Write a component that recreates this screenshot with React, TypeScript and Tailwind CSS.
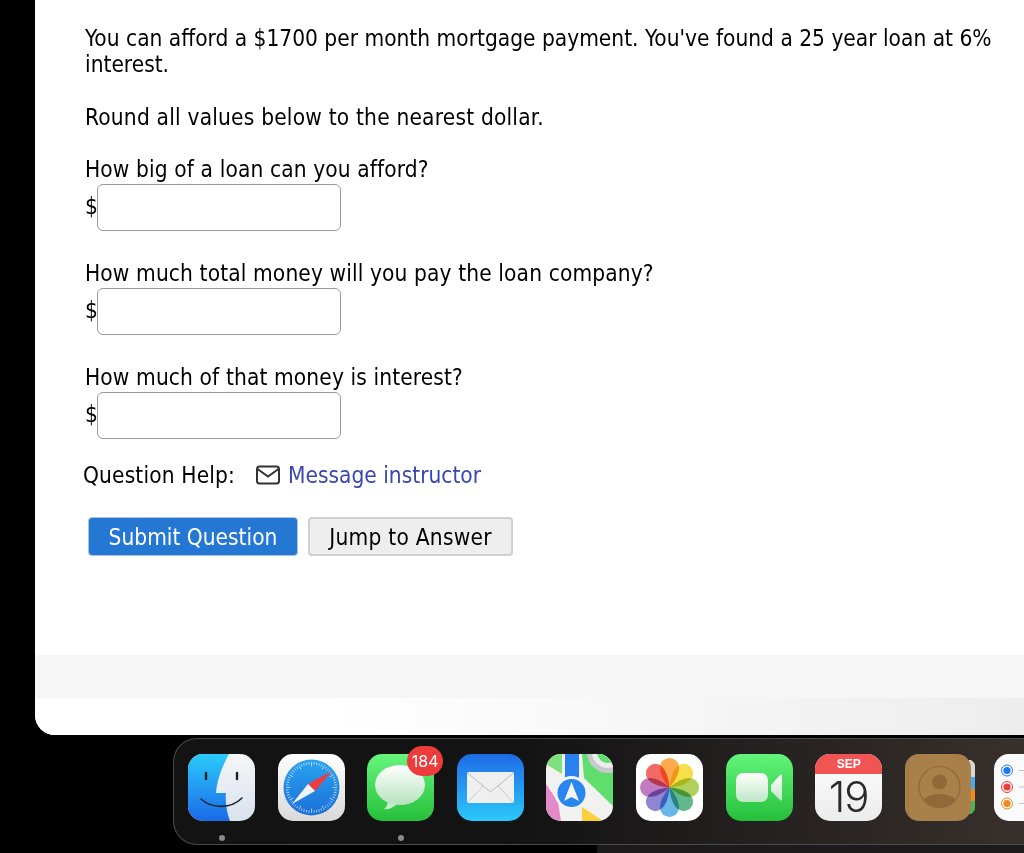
import React from "react";

const font = { fontFamily: '"DejaVu Sans Condensed", "DejaVu Sans", sans-serif', fontStretch: "condensed" } as React.CSSProperties;

const questions = [
  "How big of a loan can you afford?",
  "How much total money will you pay the loan company?",
  "How much of that money is interest?",
];

function Finder() {
  return (
    <svg viewBox="0 0 67 67" className="w-[67px] h-[67px]">
      <defs>
        <linearGradient id="finderBlue" x1="0" y1="0" x2="0" y2="1">
          <stop offset="0" stopColor="#2bcbfb" />
          <stop offset="1" stopColor="#1a6ae8" />
        </linearGradient>
        <linearGradient id="finderLight" x1="0" y1="0" x2="0" y2="1">
          <stop offset="0" stopColor="#f5f6f7" />
          <stop offset="1" stopColor="#d8e2ee" />
        </linearGradient>
        <clipPath id="finderClip"><rect width="67" height="67" rx="15" /></clipPath>
      </defs>
      <g clipPath="url(#finderClip)">
        <rect width="67" height="67" fill="url(#finderLight)" />
        <path d="M0 0H41C35 11 29 25 28 39H38C37 49 39 59 42 67H0Z" fill="url(#finderBlue)" />
      </g>
      <path d="M18 19v6M49 19v6" stroke="#222" strokeWidth="2.4" strokeLinecap="round" />
      <path d="M13 45C24 55 43 55 54 44" stroke="#1c2530" strokeWidth="1.6" fill="none" strokeLinecap="round" />
    </svg>
  );
}

function Safari() {
  const ticks = Array.from({ length: 60 }, (_, i) => i * 6);
  return (
    <svg viewBox="0 0 67 67" className="w-[67px] h-[67px]">
      <defs>
        <linearGradient id="safariBg" x1="0" y1="0" x2="0" y2="1">
          <stop offset="0" stopColor="#ffffff" />
          <stop offset="1" stopColor="#d9d9d9" />
        </linearGradient>
        <linearGradient id="safariDial" x1="0" y1="0" x2="0" y2="1">
          <stop offset="0" stopColor="#2aa3ef" />
          <stop offset="1" stopColor="#1c6fd8" />
        </linearGradient>
      </defs>
      <rect width="67" height="67" rx="15" fill="url(#safariBg)" />
      <circle cx="33.5" cy="33.5" r="28" fill="url(#safariDial)" />
      {ticks.map((a) => (
        <line key={a} x1="33.5" y1="8" x2="33.5" y2={a % 30 === 0 ? 12.5 : 10.5} stroke="#d8ecfb" strokeWidth="0.7" transform={`rotate(${a} 33.5 33.5)`} />
      ))}
      <path d="M54 17L30 30L37 37Z" fill="#ee3d3c" />
      <path d="M14 50L30 30L37 37Z" fill="#f2f2f2" />
    </svg>
  );
}

function Messages() {
  return (
    <svg viewBox="0 0 67 67" className="w-[67px] h-[67px]">
      <defs>
        <linearGradient id="msgBg" x1="0" y1="0" x2="0" y2="1">
          <stop offset="0" stopColor="#66f67c" />
          <stop offset="1" stopColor="#26bf3b" />
        </linearGradient>
        <linearGradient id="msgBubble" x1="0" y1="0" x2="0" y2="1">
          <stop offset="0" stopColor="#ffffff" />
          <stop offset="1" stopColor="#b5e2bd" />
        </linearGradient>
      </defs>
      <rect width="67" height="67" rx="15" fill="url(#msgBg)" />
      <path d="M21 46C21 50 19 54 17 55C21 56 26 54 30 50Z" fill="#c6ebcd" />
      <ellipse cx="33" cy="31" rx="25" ry="20" fill="url(#msgBubble)" />
    </svg>
  );
}

function Mail() {
  return (
    <svg viewBox="0 0 67 67" className="w-[67px] h-[67px]">
      <defs>
        <linearGradient id="mailBg" x1="0" y1="0" x2="0" y2="1">
          <stop offset="0" stopColor="#1f6be6" />
          <stop offset="1" stopColor="#2bc9fb" />
        </linearGradient>
      </defs>
      <rect width="67" height="67" rx="15" fill="url(#mailBg)" />
      <rect x="10" y="18" width="47" height="31" rx="2" fill="#f0efef" />
      <path d="M10.5 19L33.5 38L56.5 19" fill="none" stroke="#b9b9bd" strokeWidth="1" />
      <path d="M11 48L26 32M56 48L41 32" fill="none" stroke="#c9c9cc" strokeWidth="1" />
    </svg>
  );
}

function Maps() {
  return (
    <svg viewBox="0 0 67 67" className="w-[67px] h-[67px]">
      <defs>
        <clipPath id="mapsClip"><rect width="67" height="67" rx="15" /></clipPath>
      </defs>
      <g clipPath="url(#mapsClip)">
        <rect width="67" height="67" fill="#f1f1ef" />
        <path d="M0 0H16V20L0 10Z" fill="#7fe07f" />
        <path d="M0 30L12 48L15 67H0Z" fill="#e58ac8" />
        <path d="M36 67V53L57 67Z" fill="#fdd03a" />
        <path d="M36 0H67V52L38 24Z" fill="#5fdd6d" />
        <path d="M19 0H33V30H19Z" fill="#2a80ee" />
        <circle cx="62" cy="-2" r="21" fill="#c9c9cd" />
        <circle cx="62" cy="-2" r="16" fill="#ececee" />
        <circle cx="62" cy="-2" r="11" fill="#5fdd6d" />
        <circle cx="25.5" cy="39" r="17" fill="#f3f3f5" />
        <circle cx="25.5" cy="39" r="14" fill="#2787ee" />
        <path d="M25.5 28L33 47L25.5 43L18 47Z" fill="#f5f5f5" />
      </g>
    </svg>
  );
}

function Photos() {
  const petals = [
    ["#f9a23c", 0], ["#f5dc34", 45], ["#a9cb48", 90], ["#4fb07e", 135],
    ["#5aaee6", 180], ["#8478cc", 225], ["#b86eb8", 270], ["#ef5a55", 315],
  ] as const;
  return (
    <svg viewBox="0 0 67 67" className="w-[67px] h-[67px]">
      <rect width="67" height="67" rx="15" fill="#ffffff" />
      {petals.map(([color, a]) => (
        <path
          key={a}
          d="M33.5 33.5C27 26 24 19 24 13.5A9.5 9.5 0 0 1 43 13.5C43 19 40 26 33.5 33.5Z"
          fill={color}
          fillOpacity="0.9"
          className="mix-blend-multiply"
          transform={`rotate(${a} 33.5 33.5)`}
        />
      ))}
    </svg>
  );
}

function FaceTime() {
  return (
    <svg viewBox="0 0 67 67" className="w-[67px] h-[67px]">
      <defs>
        <linearGradient id="ftBg" x1="0" y1="0" x2="0" y2="1">
          <stop offset="0" stopColor="#63f57b" />
          <stop offset="1" stopColor="#26bf3c" />
        </linearGradient>
        <linearGradient id="ftCam" x1="0" y1="0" x2="0" y2="1">
          <stop offset="0" stopColor="#ffffff" />
          <stop offset="1" stopColor="#bfe6c6" />
        </linearGradient>
      </defs>
      <rect width="67" height="67" rx="15" fill="url(#ftBg)" />
      <rect x="10" y="19" width="32" height="29" rx="7" fill="url(#ftCam)" />
      <path d="M45 31L54 21C55 20 56 21 56 22V45C56 47 55 47 54 46L45 37Z" fill="url(#ftCam)" />
    </svg>
  );
}

function CalendarIcon() {
  return (
    <div className="w-[67px] h-[67px] rounded-[15px] overflow-hidden bg-gradient-to-b from-white to-[#ececec] flex flex-col items-center">
      <div className="w-full h-[20px] bg-[#f25454] text-white text-center text-[12px] leading-[20px] font-semibold font-['Liberation_Sans',sans-serif]">SEP</div>
      <div className="text-[#2a2a2a] text-[42px] leading-[46px] font-light tracking-[-1px] font-['Inter',sans-serif]">19</div>
    </div>
  );
}

function Contacts() {
  return (
    <svg viewBox="0 0 67 67" className="w-[67px] h-[67px] overflow-visible">
      <defs>
        <clipPath id="contactsRing"><circle cx="34.5" cy="33" r="20" /></clipPath>
      </defs>
      <path d="M62 6H66C69 8 70 10 70 12V23H62Z" fill="#d8d8d4" />
      <rect x="62" y="23" width="8" height="12" fill="#4aa9e8" />
      <rect x="62" y="35" width="8" height="12" fill="#ee8a1e" />
      <path d="M62 47H70V54C70 57 68 58 66 60H62Z" fill="#4cb25c" />
      <rect width="66" height="67" rx="14" fill="#a97f4a" />
      <path d="M3.5 5V62" stroke="#a07744" strokeWidth="1" />
      <circle cx="34.5" cy="33" r="20.5" fill="none" stroke="#8f6a38" strokeWidth="1.2" />
      <circle cx="34.5" cy="28" r="7.5" fill="#8f6a38" />
      <ellipse cx="34.5" cy="54" rx="20" ry="14" fill="#8f6a38" clipPath="url(#contactsRing)" />
    </svg>
  );
}

function Reminders() {
  return (
    <svg viewBox="0 0 67 67" className="w-[67px] h-[67px]">
      <rect width="67" height="67" rx="15" fill="#fafafa" />
      <circle cx="13" cy="16.5" r="5.5" fill="none" stroke="#1f7bf2" strokeWidth="1" />
      <circle cx="13" cy="16.5" r="3.6" fill="#1f7bf2" />
      <circle cx="13" cy="33" r="5.5" fill="none" stroke="#ee3b3b" strokeWidth="1" />
      <circle cx="13" cy="33" r="3.6" fill="#ee3b3b" />
      <circle cx="13" cy="49.5" r="5.5" fill="none" stroke="#ee8a1e" strokeWidth="1" />
      <circle cx="13" cy="49.5" r="3.6" fill="#ee8a1e" />
      <path d="M25 16.5H60M25 33H60M25 49.5H60" stroke="#c4c4c4" strokeWidth="1" />
    </svg>
  );
}

const dockItems = [
  { icon: <Finder />, running: true },
  { icon: <Safari /> },
  { icon: <Messages />, running: true, badge: "184" },
  { icon: <Mail /> },
  { icon: <Maps /> },
  { icon: <Photos /> },
  { icon: <FaceTime /> },
  { icon: <CalendarIcon /> },
  { icon: <Contacts /> },
  { icon: <Reminders /> },
];

export default function App() {
  return (
    <div className="w-[1024px] h-[853px] bg-black overflow-hidden flex flex-col">
      <div className="ml-[35px] h-[735px] shrink-0 rounded-bl-[20px] overflow-hidden bg-white flex flex-col">
        <div style={font} className="flex-1 pl-[50px] pr-[30px] pt-[25px] text-[22.5px] leading-[26px] text-black tracking-[0.12px]">
          <p className="tracking-normal">You can afford a $1700 per month mortgage payment. You've found a 25 year loan at 6% interest.</p>
          <p className="mt-[27px] tracking-[0.2px]">Round all values below to the nearest dollar.</p>
          <div className="mt-[26px] flex flex-col gap-[29px]">
            {questions.map((q) => (
              <div key={q}>
                <p>{q}</p>
                <div className="flex items-center mt-[2px]">
                  <span className="w-[12px] -mt-[3px] font-medium">$</span>
                  <input className="w-[244px] h-[47px] rounded-[6px] border border-[#9a9a9a] bg-white" />
                </div>
              </div>
            ))}
          </div>
          <div className="flex items-center mt-[23px] -ml-[2px]">
            <span className="tracking-[0.15px]">Question Help:</span>
            <svg viewBox="0 0 24 20" className="w-[24px] h-[20px] ml-[21px] mr-[8px]" fill="none" stroke="#333" strokeWidth="2">
              <rect x="1" y="1.5" width="22" height="17" rx="2.5" />
              <path d="M1.5 4L12 11.5L22.5 4" />
            </svg>
            <a className="text-[#3a46ae] tracking-normal">Message instructor</a>
          </div>
          <div className="flex items-center gap-[10px] mt-[29px] ml-[3px]">
            <button style={font} className="w-[210px] h-[39px] rounded-[4px] border border-[#a9c3e0] bg-[#2477d2] text-white tracking-normal">Submit Question</button>
            <button style={font} className="w-[205px] h-[39px] rounded-[4px] border-2 border-[#d0d0d0] bg-[#eeeeee] text-black tracking-[0.25px]">Jump to Answer</button>
          </div>
        </div>
        <div className="h-[43px] bg-[#f6f6f6]" />
        <div className="h-[37px] bg-gradient-to-r from-white from-30% to-[#ededed]" />
      </div>
      <div className="ml-[173px] mt-[3px] h-[107px] shrink-0 rounded-l-[24px] border border-r-0 border-[#4b4a4a] bg-gradient-to-r from-[#131314] from-40% to-[#38302c] pl-[14px] pt-[15px] flex gap-[22.6px] overflow-hidden">
        {dockItems.map((item, i) => (
          <div key={i} className="relative w-[67px] shrink-0 flex flex-col items-center">
            {item.icon}
            {item.badge && (
              <span className="absolute -top-[8px] left-[40px] w-[36px] h-[30px] rounded-full bg-[#ee3b3b] text-white text-center text-[16px] leading-[30px] font-['Inter',sans-serif]">{item.badge}</span>
            )}
            {item.running && <span className="mt-[14px] w-[6px] h-[6px] rounded-full bg-[#8a8a8a]" />}
          </div>
        ))}
      </div>
      <div className="ml-[597px] flex-1 bg-[#1c1a1a]" />
    </div>
  );
}
